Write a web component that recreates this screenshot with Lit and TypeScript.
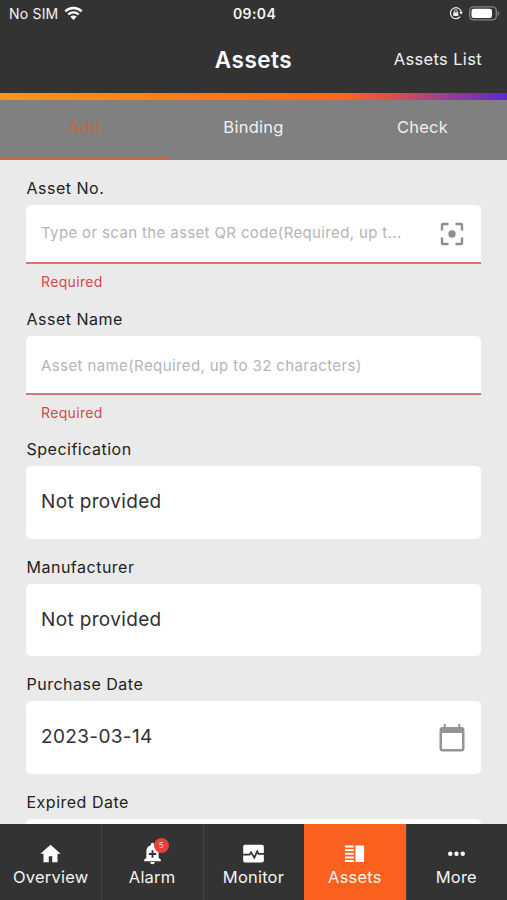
import { LitElement, html, css, svg, nothing, TemplateResult } from "lit";
import { customElement, property } from "lit/decorators.js";

const icons: Record<string, TemplateResult> = {
  home: svg`<path d="M12 2.800 1.500 12.300h3.200V21h5.500v-6.200h3.600V21h5.500v-8.700h3.200z"/>`,
  bell: svg`<path fill-rule="evenodd" d="M10.500 2.200a1.500 1.500 0 0 1 3 0v.9c3.100.8 4.900 3.500 4.900 6.800v6.600l2.300 2V20H3.300v-1.500l2.300-2V9.900c0-3.300 1.800-6 4.900-6.800zM11 8.500v3H8.200v2H11v3h2v-3h2.800v-2H13v-3zM9.700 20.800h4.600a2.300 2.300 0 0 1-4.600 0z"/>`,
  monitor: svg`<path d="M3.200 2.900h17.600a2 2 0 0 1 2 2v6.500h-5l-2-3.500-3.100 6.500-3.200-5.400-2 3.200H1.200V4.900a2 2 0 0 1 2-2zM1.200 14h7.300l1-1.500 3.500 5.800 3-6.600.8 1.500h6v6.100a2 2 0 0 1-2 2H3.200a2 2 0 0 1-2-2z"/>`,
  assets: svg`<path d="M2 3.700h9.300v2H2zM2 7.500h9.300v2H2zM2 11.300h9.300v2H2zM2 15.100h9.300v2H2zM2 18.900h9.300v2H2zM13 3.700h9v17.200h-9z"/>`,
  more: svg`<circle cx="5.500" cy="12.200" r="2.300"/><circle cx="12" cy="12.200" r="2.300"/><circle cx="18.500" cy="12.200" r="2.300"/>`,
};

@customElement("status-bar")
class StatusBar extends LitElement {
  static styles = css`
    :host { display: grid; grid-template-columns: 1fr auto 1fr; align-items: center; height: 27px; padding: 0 7px 0 9px; color: #f4f4f4; }
    .left, .right { display: flex; align-items: center; }
    .left { gap: 6px; font-size: 14px; letter-spacing: 0.2px; }
    .left svg { margin-top: -1px; }
    .time { font-size: 14px; font-weight: 600; letter-spacing: 0.4px; }
    .right { justify-content: flex-end; gap: 6px; }
    svg { display: block; }
    .right svg { margin-top: -1px; }
  `;
  render() {
    return html`
      <div class="left"><span>No SIM</span>
        <svg width="19" height="15" viewBox="0 0 19 15" fill="none" stroke="#fff" stroke-width="2.400">
          <path d="M1.300 5.400a11.700 11.700 0 0 1 16.400 0M4.300 8.500a7.400 7.400 0 0 1 10.400 0"/>
          <path d="M6.300 10.800a4.600 4.600 0 0 1 6.400 0L9.500 14z" fill="#fff" stroke="none"/>
        </svg>
      </div>
      <div class="time">09:04</div>
      <div class="right">
        <svg width="14" height="14" viewBox="0 0 14 14" fill="none" stroke="#eee" stroke-width="1.300">
          <path d="M11.200 10.700A5.500 5.500 0 1 1 12.300 6"/>
          <path d="M10.300 6h3.600l-1.800 2.700z" fill="#eee" stroke="none"/>
          <rect x="4.300" y="6.200" width="5" height="3.800" rx=".6" fill="#eee" stroke="none"/>
          <path d="M5.300 6.500V5.300a1.500 1.500 0 0 1 3 0v1.200" stroke-width="1"/>
        </svg>
        <svg width="31" height="15" viewBox="0 0 31 15">
          <rect x=".7" y=".9" width="26.600" height="13" rx="3.800" fill="none" stroke="#858585" stroke-width="1.300"/>
          <rect x="2.500" y="2.700" width="20.500" height="9.400" rx="2.300" fill="#fff"/>
          <path d="M28.600 5v4.800c2.200-.8 2.200-4 0-4.800z" fill="#858585"/>
        </svg>
      </div>`;
  }
}

@customElement("form-field")
class FormField extends LitElement {
  @property() label = "";
  @property() value = "";
  @property() placeholder = "";
  @property() error = "";
  @property() icon = "";
  static styles = css`
    :host { display: block; }
    .label { height: 34px; line-height: 34px; padding-left: 0.500px; font-size: 16px; letter-spacing: 0.500px; color: #222; }
    .box { box-sizing: border-box; display: flex; align-items: center; justify-content: space-between; height: 72.500px; padding: 0 15px; background: #fff; border-radius: 5px; }
    .box.invalid { height: 59.200px; border-bottom: 2px solid #d47577; border-radius: 5px 5px 0 0; }
    .value { font-size: 19px; letter-spacing: 0.350px; color: #303030; padding-bottom: 2px; }
    .hint { font-size: 15px; letter-spacing: 0.400px; color: #b5b5b5; white-space: nowrap; }
    .invalid .hint { padding-top: 3px; }
    .invalid.scan .hint { padding: 0 0 3px; letter-spacing: 0.360px; }
    .error { height: 37.500px; line-height: 35px; padding-left: 15px; font-size: 14px; letter-spacing: 0.350px; color: #d04a4e; }
    .gap { height: 11px; }
    svg { display: block; margin-right: 1px; }
  `;
  render() {
    return html`
      <div class="label">${this.label}</div>
      <div class="box ${this.error ? "invalid" : ""} ${this.icon}">
        ${this.placeholder ? html`<span class="hint">${this.placeholder}</span>` : html`<span class="value">${this.value}</span>`}
        ${this.icon === "scan" ? html`
          <svg width="26" height="26" viewBox="0 0 26 26" fill="none" stroke="#8e8e8e" stroke-width="2.400">
            <path d="M3 9.500V4q0-1 1-1h5.500M16.500 3H22q1 0 1 1v5.500M23 16.500V22q0 1-1 1h-5.500M9.500 23H4q-1 0-1-1v-5.500"/>
            <circle cx="13" cy="13" r="3.700" fill="#8e8e8e" stroke="none"/>
          </svg>` : nothing}
        ${this.icon === "date" ? html`
          <svg width="26" height="30" viewBox="0 0 26 30" fill="#949494">
            <path fill-rule="evenodd" d="M4.700 1h2v3h12.600V1h2v3h1.200a3 3 0 0 1 3 3v18.500a3 3 0 0 1-3 3h-19a3 3 0 0 1-3-3V7a3 3 0 0 1 3-3h1.200zM3 10v15.100q0 1 1 1h18q1 0 1-1V10z"/>
          </svg>` : nothing}
      </div>
      ${this.error ? html`<div class="error">${this.error}</div>` : html`<div class="gap"></div>`}`;
  }
}

@customElement("app-root")
class AppRoot extends LitElement {
  static styles = css`
    :host { display: flex; flex-direction: column; height: 900px; overflow: hidden; background: #eaeaea; font-family: Inter, "Liberation Sans", sans-serif; }
    .top { flex: none; background: #333; }
    .header { display: grid; grid-template-columns: 1fr auto 1fr; align-items: center; height: 66px; padding: 0 25px 2px; box-sizing: border-box; color: #fff; }
    .title { grid-column: 2; font-size: 22.500px; font-weight: 600; letter-spacing: 0.500px; }
    .link { justify-self: end; font-size: 16.500px; letter-spacing: 0.350px; color: #f1f1f1; }
    .stripe { height: 6.500px; background: linear-gradient(90deg, #fb9321 0%, #fa7417 50%, #fa6818 67%, #d34c59 79%, #8f3a9d 90%, #5a2bd0 100%); }
    .tabs { display: grid; grid-template-columns: repeat(3, 1fr); flex: none; height: 60px; background: #808080; color: #f1f1f1; }
    .tab { box-sizing: border-box; padding-bottom: 2px; display: flex; align-items: center; justify-content: center; font-size: 16.500px; letter-spacing: 0.250px; border-bottom: 3px solid transparent; }
    .tab.active { color: #bd6848; border-color: #d3643b; }
    .form { flex: 1; min-height: 0; overflow: hidden; padding: 11.500px 26px 0; }
    .nav { flex: none; display: grid; grid-template-columns: repeat(5, 1fr); height: 76px; background: #333; }
    .item { box-sizing: border-box; display: flex; flex-direction: column; align-items: center; padding: 18px 1px 0 0; gap: 1px; border-left: 1px solid #424242; color: #f3f3f3; font-size: 16.500px; line-height: 23px; letter-spacing: 0.200px; }
    .item:first-child { border-left-color: transparent; }
    .item.active { background: #fa601e; border-color: #fa601e; }
    .glyph { position: relative; }
    .glyph svg { display: block; fill: #fff; }
    .badge { position: absolute; left: 13px; top: -4px; width: 15px; height: 15px; border-radius: 50%; background: #e83f38; color: #ffc9c5; font-size: 8px; line-height: 15px; text-align: center; letter-spacing: 0; }
  `;
  render() {
    const tabs = ["Add", "Binding", "Check"];
    const nav = [["home", "Overview"], ["bell", "Alarm"], ["monitor", "Monitor"], ["assets", "Assets"], ["more", "More"]];
    return html`
      <div class="top">
        <status-bar></status-bar>
        <div class="header"><div class="title">Assets</div><div class="link">Assets List</div></div>
        <div class="stripe"></div>
      </div>
      <div class="tabs">${tabs.map((t, i) => html`<div class="tab ${i === 0 ? "active" : ""}">${t}</div>`)}</div>
      <div class="form">
        <form-field label="Asset No." placeholder="Type or scan the asset QR code(Required, up t..." error="Required" icon="scan"></form-field>
        <form-field label="Asset Name" placeholder="Asset name(Required, up to 32 characters)" error="Required"></form-field>
        <form-field label="Specification" value="Not provided"></form-field>
        <form-field label="Manufacturer" value="Not provided"></form-field>
        <form-field label="Purchase Date" value="2023-03-14" icon="date"></form-field>
        <form-field label="Expired Date"></form-field>
      </div>
      <div class="nav">${nav.map(([icon, text]) => html`
        <div class="item ${icon === "assets" ? "active" : ""}">
          <div class="glyph"><svg width="23" height="23" viewBox="0 0 24 24">${icons[icon]}</svg>${icon === "bell" ? html`<span class="badge">5</span>` : nothing}</div>
          <span>${text}</span>
        </div>`)}
      </div>`;
  }
}
